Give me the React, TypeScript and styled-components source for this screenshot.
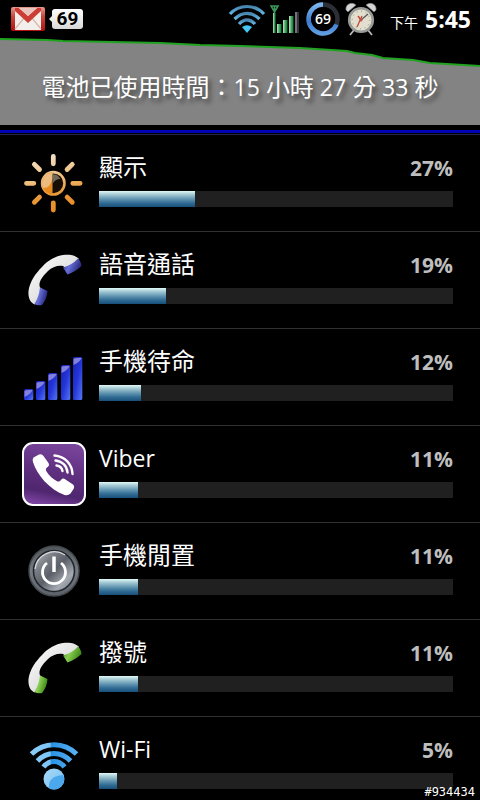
import React from "react";
import styled, { createGlobalStyle } from "styled-components";

const GlobalStyle = createGlobalStyle`
  * { box-sizing: border-box; }
  body {
    margin: 0;
    background: #000;
    color: #fff;
    font-family: "Open Sans", "Noto Sans CJK TC", sans-serif;
  }
`;

const Screen = styled.div`
  position: relative;
  display: flex;
  flex-direction: column;
  height: 100vh;
  overflow: hidden;
  background: #000;
`;

const StatusBar = styled.header`
  display: flex;
  flex: none;
  align-items: center;
  justify-content: space-between;
  height: 38px;
  padding: 0 9px 0 11px;
`;

const StatusGroup = styled.div<{ $gap: number }>`
  display: flex;
  align-items: center;
  gap: ${(p) => p.$gap}px;

  svg {
    display: block;
    flex: none;
  }
`;

const CountBadge = styled.span`
  display: flex;
  align-items: center;
  justify-content: center;
  position: relative;
  width: 31px;
  height: 20px;
  margin-left: 2px;
  border-radius: 3px;
  background: linear-gradient(#fff, #d8d8d8);
  color: #000;
  font: bold 19px/20px Roboto, sans-serif;

  &::before {
    content: "";
    position: absolute;
    left: -3px;
    top: 7px;
    border: 3px solid transparent;
    border-left-width: 0;
    border-right-color: #eee;
  }
`;

const Clock = styled.time`
  display: flex;
  align-items: baseline;
  gap: 7px;
  margin-left: 9px;
  padding-top: 3px;
  font-size: 23px;
  line-height: 30px;
  font-weight: bold;
`;

const Meridiem = styled.span`
  font-size: 14px;
  font-weight: normal;
`;

const Summary = styled.section`
  display: grid;
  flex: none;
  height: 87px;

  > * {
    grid-area: 1 / 1;
  }
`;

const HistoryChart = styled.svg`
  display: block;
  width: 100%;
  height: 87px;
`;

const SummaryTitle = styled.h1`
  margin: 0;
  padding-top: 32px;
  font-size: 24px;
  line-height: 34px;
  font-weight: normal;
  text-align: center;
  text-shadow: 3px 4px 4px #444;
  white-space: nowrap;
`;

const Figure = styled.span`
  font-size: 23px;
`;

const ChargeLine = styled.div`
  flex: none;
  height: 10px;
  border-top: 5px solid #000;
  border-bottom: 1px solid #26264a;
  background: linear-gradient(#0000b4 3px, #000 3px);
`;

const UsageList = styled.ul`
  flex: 1;
  min-height: 0;
  margin: 0;
  padding: 0;
  overflow-y: auto;
  scrollbar-width: none;
  list-style: none;
`;

const UsageRow = styled.li`
  display: flex;
  align-items: center;
  gap: 13px;
  height: 97px;
  padding: 0 27px 0 22px;
  border-bottom: 1px solid #303030;
`;

const AppIcon = styled.svg`
  display: block;
  flex: none;
  width: 64px;
  height: 64px;
`;

const UsageBody = styled.div`
  flex: 1;
  min-width: 0;
  padding-bottom: 8px;
`;

const UsageHeading = styled.div`
  display: flex;
  align-items: baseline;
  justify-content: space-between;
  height: 40px;
  line-height: 32px;
`;

const UsageName = styled.span<{ $latin: boolean }>`
  font-size: ${(p) => (p.$latin ? 23 : 24)}px;
`;

const UsagePercent = styled.span`
  color: #bebebe;
  font-size: 21px;
  font-weight: bold;
`;

const Track = styled.div`
  height: 16px;
  background: #202020;
`;

const Fill = styled.div`
  height: 100%;
  background: linear-gradient(#dffaf8 0%, #a9cdd6 20%, #6296b2 50%, #316c94 75%, #174f7b 100%);
`;

const DeviceTag = styled.small`
  position: absolute;
  right: 5px;
  bottom: 0;
  font: 12px/16px "DejaVu Sans Mono", monospace;
`;

const GmailIcon = () => (
  <svg width="34" height="24" viewBox="0 0 34 24" aria-label="Gmail">
    <defs>
      <linearGradient id="mailRed" x1="0" y1="0" x2="0" y2="1">
        <stop offset="0" stopColor="#e59a90" />
        <stop offset="0.4" stopColor="#c9453c" />
        <stop offset="1" stopColor="#b3100f" />
      </linearGradient>
    </defs>
    <rect x="0" y="0" width="34" height="24" rx="2" fill="url(#mailRed)" />
    <rect x="4" y="1" width="26" height="22" fill="#f3efec" />
    <path d="M4 22 13 11M30 22 21 11" stroke="#d8b9b0" strokeWidth="1.3" />
    <path d="M4 1h4l9 8 9-8h4v3L17 16 4 4z" fill="#cc3e35" />
    <path d="M8 1h18l-9 8z" fill="#e9c5bd" />
  </svg>
);

const WifiStatusIcon = () => (
  <svg width="38" height="30" viewBox="0 0 38 30" aria-label="Wi-Fi">
    <defs>
      <linearGradient id="wifiStatus" x1="0" y1="0" x2="0" y2="1">
        <stop offset="0" stopColor="#4685ae" />
        <stop offset="1" stopColor="#64b6e5" />
      </linearGradient>
    </defs>
    <g fill="none" stroke="url(#wifiStatus)" strokeWidth="3.200">
      <path d="M2 10C11 0 27 0 36 10" />
      <path d="M6.500 15C14 7.500 24 7.500 31.500 15" />
      <path d="M11 20C16 14.500 22 14.500 27 20" />
    </g>
    <path d="M14 23Q19 19.500 24 23L19 29z" fill="#45c6f4" />
  </svg>
);

const CellStatusIcon = () => (
  <svg width="31" height="30" viewBox="0 0 31 30" aria-label="Signal">
    <defs>
      <linearGradient id="cellBar" x1="0" y1="0" x2="1" y2="0">
        <stop offset="0" stopColor="#c2e6ca" />
        <stop offset="0.5" stopColor="#47a963" />
        <stop offset="1" stopColor="#15702f" />
      </linearGradient>
    </defs>
    <path d="M1 2h7L4.500 8zM4.500 2v27" fill="none" stroke="#3c9658" strokeWidth="1.600" />
    <g fill="url(#cellBar)">
      <rect x="3" y="9" width="2.500" height="20" />
      <rect x="7" y="20" width="4.500" height="9" />
      <rect x="13" y="16" width="4.500" height="13" />
      <rect x="19" y="12" width="4.500" height="17" />
    </g>
    <rect x="25" y="8" width="4" height="21" fill="#77727a" />
    <path d="M28 8v21" stroke="#37333a" strokeWidth="2" />
  </svg>
);

const RingText = styled.text`
  fill: #fff;
  font: 600 14px "Open Sans", sans-serif;
  text-anchor: middle;
`;

const BatteryRingIcon = () => (
  <svg width="36" height="36" viewBox="0 0 36 36" aria-label="Battery 69">
    <defs>
      <linearGradient id="ringBlue" x1="0" y1="0" x2="0" y2="1">
        <stop offset="0" stopColor="#7cb4ec" />
        <stop offset="0.6" stopColor="#3c7ad0" />
        <stop offset="1" stopColor="#5f9ce2" />
      </linearGradient>
    </defs>
    <circle cx="18" cy="18" r="14.500" fill="none" stroke="#2c3036" strokeWidth="4.500" />
    <path d="M18 3.500A14.500 14.500 0 1 0 31.500 23.500" fill="none" stroke="url(#ringBlue)" strokeWidth="4.500" />
    <RingText x="18" y="23">69</RingText>
  </svg>
);

const AlarmIcon = () => (
  <svg width="32" height="34" viewBox="0 0 32 34" aria-label="Alarm">
    <path d="M9 28 5 33M23 28l4 5" stroke="#bbb" strokeWidth="1.800" />
    <path d="M1 8C0 3 6-1 11 3L3 10zM31 8C32 3 26-1 21 3l8 7z" fill="#d5d5d5" stroke="#777" strokeWidth="0.700" />
    <path d="m9 7 2 3M23 7l-2 3" stroke="#aaa" strokeWidth="1.500" />
    <circle cx="16" cy="18" r="11.800" fill="#e2dfce" stroke="#999b98" strokeWidth="2.600" />
    <circle cx="16" cy="18" r="8.800" fill="none" stroke="#8f8c80" strokeWidth="1" strokeDasharray="1 3.600" />
    <path d="m16 18 7-6" stroke="#555" strokeWidth="1.200" />
    <path d="m16 18-3-4" stroke="#c8463a" strokeWidth="1.500" />
    <path d="m12 25 5-11" stroke="#c8463a" strokeWidth="1.300" />
    <circle cx="16" cy="18" r="1.500" fill="#bb5347" />
  </svg>
);

const rayAngles = [0, 45, 90, 135, 180, 225, 270, 315];

const DisplayIcon = () => (
  <AppIcon viewBox="0 0 64 64" aria-hidden>
    <defs>
      <linearGradient id="sun" gradientUnits="userSpaceOnUse" x1="20" y1="3" x2="32" y2="61">
        <stop offset="0" stopColor="#f1e4cc" />
        <stop offset="0.45" stopColor="#efbd7c" />
        <stop offset="0.7" stopColor="#e99a3c" />
        <stop offset="1" stopColor="#e88b24" />
      </linearGradient>
    </defs>
    <g stroke="url(#sun)" strokeWidth="4.800" strokeLinecap="round">
      {rayAngles.map((deg) => {
        const a = (deg * Math.PI) / 180;
        return (
          <line
            key={deg}
            x1={31.3 + Math.cos(a) * 19.5}
            y1={32.3 + Math.sin(a) * 19.5}
            x2={31.3 + Math.cos(a) * 26.8 + 0.01}
            y2={32.3 + Math.sin(a) * 26.8 + 0.01}
          />
        );
      })}
    </g>
    <circle cx="31.300" cy="32.300" r="11.200" fill="#160e04" stroke="url(#sun)" strokeWidth="2.600" />
    <path d="M30.500 21.500a10.800 10.800 0 0 0 0 21.600z" fill="#e78a1e" />
    <path d="M30.500 21.500A10.800 10.800 0 0 0 21 37Q29 37 30.500 27z" fill="#edbb7f" />
    <path d="M30.500 23a9.500 9.500 0 0 1 8 5Q33 28 30.500 33z" fill="#736b58" />
  </AppIcon>
);

const HandsetIcon = ({ id, dark, light }: { id: string; dark: string; light: string }) => (
  <AppIcon viewBox="0 0 64 64" aria-hidden>
    <defs>
      <linearGradient id={`${id}Body`} x1="0" y1="0" x2="1" y2="1">
        <stop offset="0" stopColor="#fff" />
        <stop offset="0.5" stopColor="#e4e4e4" />
        <stop offset="1" stopColor="#aaa" />
      </linearGradient>
      <linearGradient id={`${id}Cap`} x1="0" y1="0" x2="1" y2="0.4">
        <stop offset="0" stopColor={dark} />
        <stop offset="0.45" stopColor={light} />
        <stop offset="1" stopColor={dark} />
      </linearGradient>
    </defs>
    <path
      d="M13 56.500C8 55 6 49 6.500 43C8 33 14 25 20 19C26 12 34 8 41 7C47 6 54 7 57 11L46 22L41 18C36 17 30 19 26 23C20 29 16 34 18 39.500L23 43z"
      fill={`url(#${id}Body)`}
    />
    <path d="M18 39.500L25.500 43Q25 51 20 57Q16 58 12.500 56Q17 49 18 39.500z" fill={`url(#${id}Cap)`} />
    <path d="M41 19.500Q50 17 56 10.500Q59 13 59.500 18Q53 24 45.500 26.500z" fill={`url(#${id}Cap)`} />
  </AppIcon>
);

const standbyBars = [
  { x: 2, y: 44 },
  { x: 14, y: 36 },
  { x: 26, y: 28 },
  { x: 39, y: 20 },
  { x: 51, y: 12 },
];

const StandbyIcon = () => (
  <AppIcon viewBox="0 0 64 64" aria-hidden>
    <defs>
      <linearGradient id="standby" x1="0" y1="0" x2="1" y2="1">
        <stop offset="0" stopColor="#1620b4" />
        <stop offset="0.5" stopColor="#2536d8" />
        <stop offset="1" stopColor="#5677f4" />
      </linearGradient>
    </defs>
    {standbyBars.map(({ x, y }) => (
      <g key={x}>
        <rect x={x} y={y} width="9.300" height={55 - y} rx="1.500" fill="url(#standby)" />
        <path d={`M${x + 0.5} ${y + 8}V${y + 2}Q${x + 1} ${y + 0.5} ${x + 8.5} ${y + 1}Q${x + 7} ${y + 5} ${x + 0.5} ${y + 8}z`} fill="#8380de" />
      </g>
    ))}
  </AppIcon>
);

const ViberIcon = () => (
  <AppIcon viewBox="0 0 64 64" aria-hidden>
    <defs>
      <linearGradient id="viber" x1="0.600" y1="0" x2="0.400" y2="1">
        <stop offset="0" stopColor="#79459c" />
        <stop offset="0.45" stopColor="#5f3080" />
        <stop offset="0.8" stopColor="#50266f" />
        <stop offset="1" stopColor="#79429f" />
      </linearGradient>
    </defs>
    <rect x="1" y="1" width="62" height="62" rx="10" fill="url(#viber)" stroke="#fff" strokeWidth="2" />
    <path
      d="M11.500 15.500L17 12.500Q20 11.500 21.500 14L26.500 21Q28 23.500 25 25.500Q23 27 24.500 29.500C27 34 31 37 35.500 39.500Q37.500 40 39 38Q41 35.500 43.500 37.500L51 42.500Q53 44.500 51.500 47L48.500 51.500Q46 54 42.500 53C27 47 15 33 11 20Q10 17 11.500 15.500z"
      fill="#fff"
    />
    <g fill="none" stroke="#fff" strokeWidth="2.400" strokeLinecap="round">
      <path d="M32.500 13.500C43 14.500 50 22 50.500 32" />
      <path d="M33.500 18.500C40.500 19.500 45 24 45.500 30.500" />
      <path d="M34.500 23.500C38.500 24 40 26 40.500 29" />
    </g>
  </AppIcon>
);

const PowerIcon = () => (
  <AppIcon viewBox="0 0 64 64" aria-hidden>
    <defs>
      <linearGradient id="powerRim" x1="0" y1="0" x2="0" y2="1">
        <stop offset="0" stopColor="#51565a" />
        <stop offset="0.5" stopColor="#777c84" />
        <stop offset="1" stopColor="#5b6069" />
      </linearGradient>
      <linearGradient id="powerFace" x1="0" y1="0" x2="1" y2="1">
        <stop offset="0" stopColor="#bdc0c5" />
        <stop offset="0.3" stopColor="#777c83" />
        <stop offset="0.5" stopColor="#5b6068" />
        <stop offset="0.75" stopColor="#a5a9b2" />
        <stop offset="1" stopColor="#6c717b" />
      </linearGradient>
    </defs>
    <circle cx="32" cy="32" r="25" fill="url(#powerRim)" stroke="#454a4e" strokeWidth="1.500" />
    <circle cx="32" cy="32" r="20.500" fill="url(#powerFace)" stroke="#22272d" strokeWidth="1.600" />
    <path d="M13 30A19.500 19.500 0 0 1 43 16" fill="none" stroke="#d7dadd" strokeWidth="1.200" />
    <g fill="none" stroke="#fff" strokeWidth="2.800">
      <path d="M25 24A11.500 11.500 0 1 0 39 24" />
      <path d="M32 17.500V33" strokeWidth="3.500" />
    </g>
  </AppIcon>
);

const WifiIcon = () => (
  <AppIcon viewBox="0 0 64 64" aria-hidden>
    <defs>
      <linearGradient id="wifiArc" gradientUnits="userSpaceOnUse" x1="8" y1="0" x2="56" y2="0">
        <stop offset="0" stopColor="#8ccdf8" />
        <stop offset="0.42" stopColor="#7bc3f5" />
        <stop offset="0.44" stopColor="#2a93e5" />
        <stop offset="1" stopColor="#5bb2f2" />
      </linearGradient>
      <linearGradient id="wifiBall" x1="0" y1="0" x2="1" y2="1">
        <stop offset="0" stopColor="#aadbf8" />
        <stop offset="1" stopColor="#71bdf2" />
      </linearGradient>
    </defs>
    <g fill="none" stroke="url(#wifiArc)" strokeWidth="5">
      <path d="M9.500 21C22 8.500 42 8.500 54.500 21" />
      <path d="M15.500 28C25 18 39 18 48.500 28" />
      <path d="M21.500 34C27 26.500 37 26.500 42.500 34" />
    </g>
    <circle cx="32" cy="46" r="10.500" fill="url(#wifiBall)" />
    <path d="M41 42A10 10 0 0 1 27 55Q26 43 41 42z" fill="#4ca8ec" />
  </AppIcon>
);

const usage = [
  { name: "顯示", percent: 27, icon: <DisplayIcon /> },
  { name: "語音通話", percent: 19, icon: <HandsetIcon id="voice" dark="#262779" light="#6870da" /> },
  { name: "手機待命", percent: 12, icon: <StandbyIcon /> },
  { name: "Viber", percent: 11, icon: <ViberIcon />, latin: true },
  { name: "手機閒置", percent: 11, icon: <PowerIcon /> },
  { name: "撥號", percent: 11, icon: <HandsetIcon id="dialer" dark="#3c8718" light="#8bcf52" /> },
  { name: "Wi-Fi", percent: 5, icon: <WifiIcon />, latin: true },
];

export default function App() {
  return (
    <Screen>
      <GlobalStyle />
      <StatusBar>
        <StatusGroup $gap={5}>
          <GmailIcon />
          <CountBadge>69</CountBadge>
        </StatusGroup>
        <StatusGroup $gap={4}>
          <WifiStatusIcon />
          <CellStatusIcon />
          <BatteryRingIcon />
          <AlarmIcon />
          <Clock>
            <Meridiem>下午</Meridiem>5:45
          </Clock>
        </StatusGroup>
      </StatusBar>
      <Summary>
        <HistoryChart viewBox="0 0 480 87" preserveAspectRatio="none" aria-hidden>
          <path d="M0 1L47 2L63 3L160 5L200 7L240 8L300 10L347 13L355 15L372 17L383 20L413 22L430 25L480 28V87H0z" fill="#838383" />
          <path d="M0 1L47 2L63 3L160 5L200 7L240 8L300 10L347 13L355 15L372 17L383 20L413 22L430 25L480 28" fill="none" stroke="#21a321" strokeWidth="2" />
        </HistoryChart>
        <SummaryTitle>
          電池已使用時間：<Figure>15 </Figure>小時<Figure> 27 </Figure>分<Figure> 33 </Figure>秒
        </SummaryTitle>
      </Summary>
      <ChargeLine />
      <UsageList>
        {usage.map(({ name, percent, icon, latin }) => (
          <UsageRow key={name}>
            {icon}
            <UsageBody>
              <UsageHeading>
                <UsageName $latin={Boolean(latin)}>{name}</UsageName>
                <UsagePercent>{percent}%</UsagePercent>
              </UsageHeading>
              <Track role="progressbar" aria-label={name} aria-valuenow={percent} aria-valuemin={0} aria-valuemax={100}>
                <Fill style={{ width: `${percent}%` }} />
              </Track>
            </UsageBody>
          </UsageRow>
        ))}
      </UsageList>
      <DeviceTag>#934434</DeviceTag>
    </Screen>
  );
}
